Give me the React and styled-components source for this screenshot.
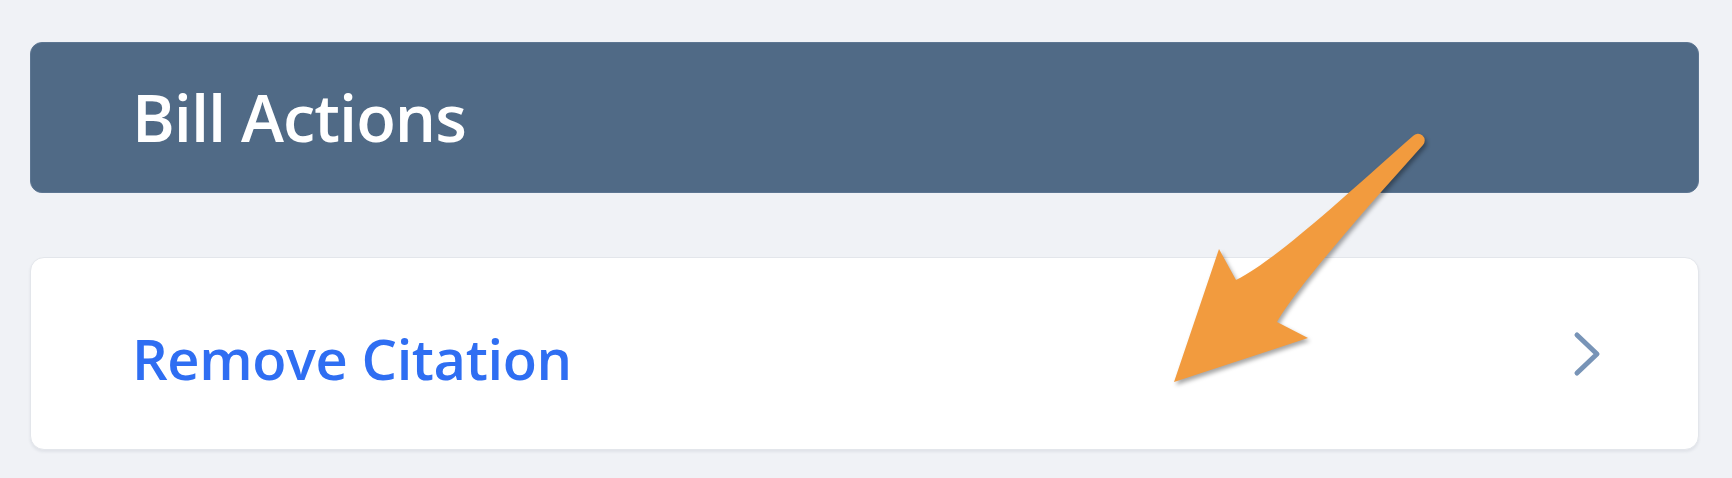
import styled, { createGlobalStyle } from "styled-components";

const GlobalStyle = createGlobalStyle`
  html, body {
    margin: 0;
    padding: 0;
    background: #f0f2f6;
  }
  body {
    font-family: "Open Sans", "Noto Sans", "Liberation Sans", sans-serif;
  }
`;

const Page = styled.div`
  position: relative;
  width: 1732px;
  height: 478px;
  box-sizing: border-box;
  padding: 42px 33px 0 30px;
  display: flex;
  flex-direction: column;
  gap: 64px;
  overflow: hidden;
`;

const SectionHeader = styled.div`
  height: 151px;
  box-sizing: border-box;
  display: flex;
  align-items: center;
  padding: 0 0 2px 101px;
  background: #506a86;
  border: 1px solid #5d7692;
  border-radius: 12px;
`;

const HeaderTitle = styled.h2`
  margin: 0;
  color: #ffffff;
  font-size: 65px;
  font-weight: 600;
  letter-spacing: -1px;
`;

const ActionCard = styled.button`
  height: 193px;
  box-sizing: border-box;
  display: flex;
  align-items: center;
  justify-content: space-between;
  padding: 0 96px 0 101px;
  background: #ffffff;
  border: 1px solid #e3e6eb;
  border-radius: 14px;
  box-shadow: 0 2px 3px rgba(40, 55, 80, 0.08);
  cursor: pointer;
  font-family: inherit;
  text-align: left;
`;

const ActionLabel = styled.span`
  color: #2f6ef2;
  font-size: 56px;
  font-weight: 600;
  letter-spacing: -0.4px;
  margin-top: 8px;
`;

const Chevron = styled.svg`
  width: 30px;
  height: 48px;
  flex-shrink: 0;
`;

// orange call-out arrow laid over the page
const Annotation = styled.svg`
  position: absolute;
  left: 0;
  top: 0;
  width: 1732px;
  height: 478px;
  pointer-events: none;
  filter: drop-shadow(2px 3px 2px rgba(0, 0, 0, 0.35));
`;

const App = () => {
  return (
    <>
      <GlobalStyle />
      <Page>
        <SectionHeader>
          <HeaderTitle>Bill Actions</HeaderTitle>
        </SectionHeader>
        <ActionCard>
          <ActionLabel>Remove Citation</ActionLabel>
          <Chevron viewBox="0 0 30 48" fill="none">
            <path
              d="M5 5 L25 24 L5 43"
              stroke="#7894b7"
              strokeWidth="5"
              strokeLinecap="round"
              strokeLinejoin="round"
            />
          </Chevron>
        </ActionCard>
        <Annotation viewBox="0 0 1732 478">
          <path
            d="M1413 136
               C1360 182, 1280 258, 1236 280
               L1219 249
               L1174 382
               L1308 338
               L1277 322
               C1295 290, 1360 215, 1423 145
               A6 6 0 0 0 1413 136 Z"
            fill="#f29b3e"
          />
        </Annotation>
      </Page>
    </>
  );
};

export default App;
